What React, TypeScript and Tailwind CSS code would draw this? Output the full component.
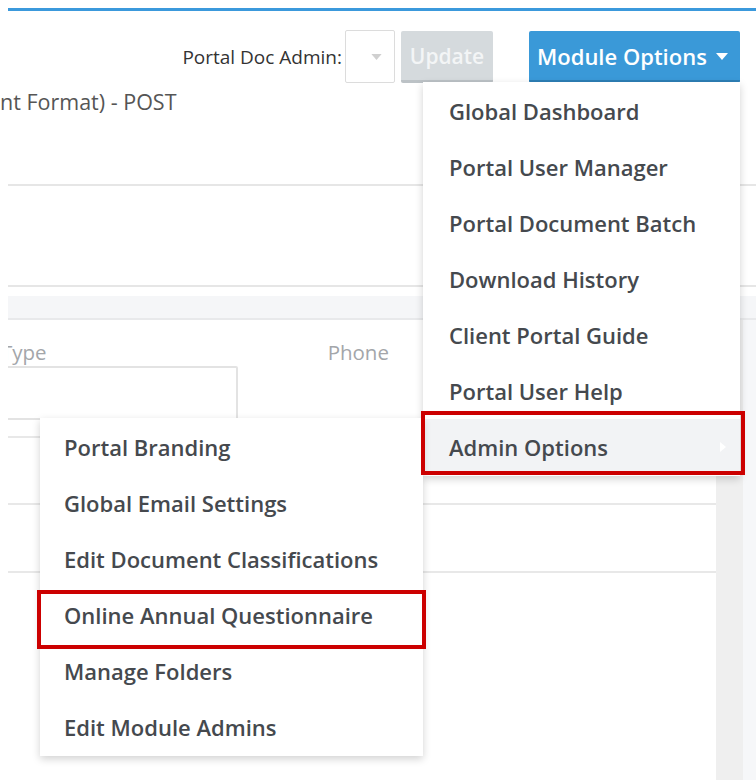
import React from "react";

const mainItems = [
  "Global Dashboard",
  "Portal User Manager",
  "Portal Document Batch",
  "Download History",
  "Client Portal Guide",
  "Portal User Help",
];

const adminItems = [
  "Portal Branding",
  "Global Email Settings",
  "Edit Document Classifications",
  "Online Annual Questionnaire",
  "Manage Folders",
  "Edit Module Admins",
];

function CaretDown({ className }: { className?: string }) {
  return (
    <svg viewBox="0 0 12 7" className={className}>
      <path d="M0 0 L12 0 L6 7 Z" fill="currentColor" />
    </svg>
  );
}

export default function App() {
  return (
    <div
      className="relative w-[756px] h-[781px] overflow-hidden bg-white"
      style={{ fontFamily: "'Open Sans', 'Noto Sans', sans-serif" }}
    >
      {/* page behind the menus */}
      <div className="h-2" />
      <div className="ml-2 h-[3px] bg-[#3b99dc]" />

      {/* header */}
      <div className="h-[173px] flex flex-col">
        <div className="flex justify-end items-center pr-4 pt-[19px]">
          <span className="text-[19px] text-[#333] mr-[3px] pt-[2px]">Portal Doc Admin:</span>
          <div className="w-[50px] h-[53px] border border-[#dcdcdc] rounded-[2px] bg-white flex items-center justify-end pr-[12px]">
            <CaretDown className="w-[11px] h-[6px] text-[#d0d0d0]" />
          </div>
          <div className="ml-[6px] w-[92px] h-[52px] rounded-[2px] bg-[#d5dadd] border-b-[3px] border-[#bcc2c6] flex items-center justify-center pt-[4px] text-[21px] font-semibold text-[#f3f5f6]">
            Update
          </div>
          <div className="ml-[36px] w-[211px] h-[52px] rounded-[2px] bg-[#3a99d8] border-b-[3px] border-[#2d7fb6] flex items-center pl-[8px] pt-[2px] text-[22px] font-semibold text-white">
            <span>Module Options</span>
            <CaretDown className="ml-[9px] w-[12px] h-[7px] text-white" />
          </div>
        </div>
        <div className="mt-[8px] text-[21.5px] text-[#555] leading-none">nt Format) - POST</div>
      </div>
      <div className="ml-2 h-[2px] bg-[#e6e6e6]" />
      <div className="h-[99px]" />
      <div className="ml-2 h-[2px] bg-[#e6e6e6]" />
      <div className="h-[9px]" />
      <div className="ml-2 h-[24px] bg-[#f5f6f8] border-b-2 border-[#e8e9eb]" />

      {/* form area */}
      <div className="flex h-[460px]">
        <div className="ml-2 w-[708px] overflow-hidden">
          <div className="flex pt-[22px] h-[46px] text-[20.5px] text-[#a3a6aa] leading-none">
            <span className="-ml-[7px]">Type</span>
            <span className="ml-[281px]">Phone</span>
          </div>
          <div className="-ml-[20px] w-[250px] h-[54px] border-2 border-[#e3e3e3] rounded-[2px]" />
          <div className="h-[16px]" />
          <div className="h-[2px] bg-[#e8e8e8]" />
          <div className="h-[65px]" />
          <div className="h-[2px] bg-[#e8e8e8]" />
          <div className="h-[66px]" />
          <div className="h-[2px] bg-[#e8e8e8]" />
        </div>
        <div className="w-[27px] bg-[#efefef]" />
        <div className="flex-1 bg-[#f6f7f9]" />
      </div>

      {/* Module Options menu */}
      <div className="absolute left-[423px] top-[82px] w-[317px] bg-white py-[1px] shadow-[0_3px_8px_rgba(0,0,0,0.18)]">
        {mainItems.map((t) => (
          <div key={t} className="h-[56px] flex items-center pl-[26px] text-[22px] font-semibold text-[#45494e]">
            {t}
          </div>
        ))}
        <div className="h-[56px] flex items-center justify-between pl-[26px] pr-[14px] bg-[#f2f3f5] text-[22px] font-semibold text-[#45494e]">
          <span>Admin Options</span>
          <svg viewBox="0 0 6 10" className="w-[6px] h-[10px]">
            <path d="M0 0 L6 5 L0 10 Z" fill="#ffffff" />
          </svg>
        </div>
      </div>

      {/* Admin Options submenu */}
      <div className="absolute left-[40px] top-[418px] w-[383px] bg-white py-[1px] shadow-[0_3px_8px_rgba(0,0,0,0.18)]">
        {adminItems.map((t) => (
          <div key={t} className="h-[56px] flex items-center pl-[24px] text-[22px] font-semibold text-[#45494e]">
            {t}
          </div>
        ))}
      </div>

      {/* highlight frames */}
      <div className="absolute left-[421px] top-[411px] w-[324px] h-[64px] border-[4px] border-[#cc0000]" />
      <div className="absolute left-[37px] top-[590px] w-[389px] h-[59px] border-[4px] border-[#cc0000]" />
    </div>
  );
}
